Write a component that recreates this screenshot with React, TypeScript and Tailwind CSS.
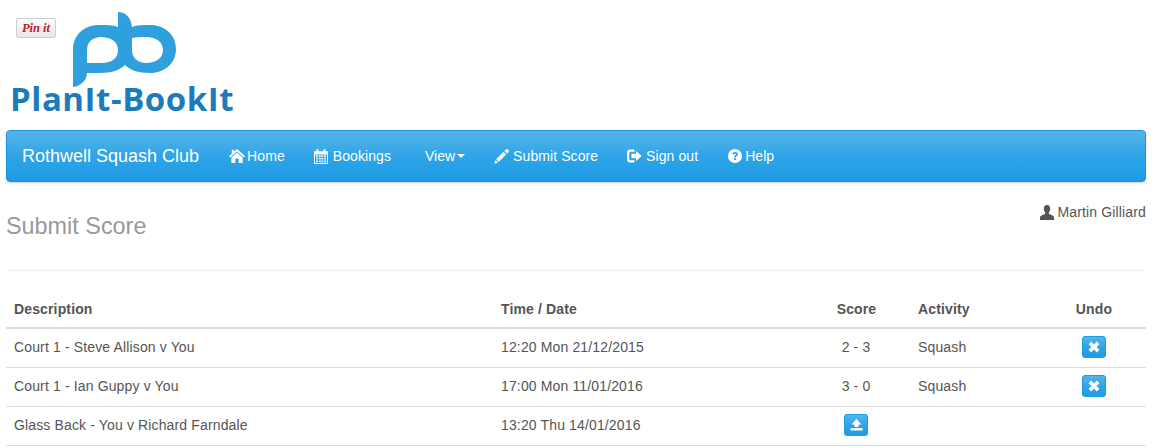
import React from "react";

const font = { fontFamily: '"Liberation Sans", Arial, sans-serif' };

function Home() {
  return (
    <svg width="16" height="14" viewBox="0 0 16 14" fill="currentColor" className="shrink-0">
      <path d="M8 0 L16 7.3 L14.9 8.6 L8 2.4 L1.1 8.6 L0 7.3 L2.8 4.8 V0.8 H5 V2.8 Z" />
      <path d="M8 3.4 L13.6 8.4 V14 H9.6 V9.6 H6.4 V14 H2.4 V8.4 Z" />
    </svg>
  );
}
function Calendar() {
  return (
    <svg width="14" height="15" viewBox="0 0 14 15" className="shrink-0">
      <path fill="currentColor" fillRule="evenodd" d="M0 2.2 H2.5 V0.3 H4.5 V2.2 H9.5 V0.3 H11.5 V2.2 H14 V15 H0 Z M1 5.4 V14 H13 V5.4 Z" />
      <path fill="currentColor" opacity="0.85" d="M2 6.2h2.2v1.8H2zM5 6.2h1.8v1.8H5zM7.4 6.2h1.8v1.8H7.4zM9.9 6.2H12v1.8H9.9zM2 8.8h2.2v1.8H2zM5 8.8h1.8v1.8H5zM7.4 8.8h1.8v1.8H7.4zM9.9 8.8H12v1.8H9.9zM2 11.4h2.2v1.8H2zM5 11.4h1.8v1.8H5zM7.4 11.4h1.8v1.8H7.4zM9.9 11.4H12v1.8H9.9z" />
    </svg>
  );
}
function Pencil() {
  return (
    <svg width="15" height="15" viewBox="0 0 15 15" fill="currentColor" className="shrink-0">
      <path d="M12 0.4 C12.6 0 13.2 0.1 13.6 0.5 L14.6 1.5 C15 1.9 15 2.5 14.6 3 L13 4.6 L10.4 2 Z" />
      <path d="M9.6 2.8 L12.2 5.4 L4.8 12.8 L2.2 10.2 Z" />
      <path d="M1.6 11 L4 13.4 L0.3 14.7 Z" />
    </svg>
  );
}
function SignOut() {
  return (
    <svg width="15" height="14" viewBox="0 0 15 14" fill="currentColor" className="shrink-0">
      <path d="M3 0.5 H7.5 V2.7 H3.6 C2.8 2.7 2.2 3.3 2.2 4.1 V9.9 C2.2 10.7 2.8 11.3 3.6 11.3 H7.5 V13.5 H3 C1.3 13.5 0 12.2 0 10.5 V3.5 C0 1.8 1.3 0.5 3 0.5 Z" />
      <path d="M9 2 L14.8 7 L9 12 V9.2 H4.5 V4.8 H9 Z" />
    </svg>
  );
}
function Help() {
  return (
    <svg width="14" height="14" viewBox="0 0 14 14" className="shrink-0">
      <circle cx="7" cy="7" r="7" fill="currentColor" />
      <path d="M4.4 5.4 C4.5 3.7 5.7 2.9 7.2 2.9 C8.9 2.9 10 3.8 10 5.1 C10 6.8 8.1 6.9 8.1 8.4 H6.2 C6.1 6.3 8 6.2 8 5.3 C8 4.8 7.7 4.6 7.1 4.6 C6.5 4.6 6.2 5 6.1 5.6 Z M6.1 9.2 H8.1 V11.1 H6.1 Z" fill="#2fa2e6" />
    </svg>
  );
}
function User() {
  return (
    <svg width="14" height="15" viewBox="0 0 14 15" fill="currentColor" className="shrink-0">
      <path d="M7 0 C9.2 0 10.2 1.6 10.2 3.8 C10.2 5.5 9.6 6.8 8.9 7.6 V9 C10.6 9.8 14 10.3 14 12.6 V15 H0 V12.6 C0 10.3 3.4 9.8 5.1 9 V7.6 C4.4 6.8 3.8 5.5 3.8 3.8 C3.8 1.6 4.8 0 7 0 Z" />
    </svg>
  );
}
function Remove() {
  return (
    <svg width="12" height="12" viewBox="0 0 12 12" fill="currentColor">
      <path d="M3.2 0.6 L6 3.4 L8.8 0.6 L11.4 3.2 L8.6 6 L11.4 8.8 L8.8 11.4 L6 8.6 L3.2 11.4 L0.6 8.8 L3.4 6 L0.6 3.2 Z" />
    </svg>
  );
}
function Upload() {
  return (
    <svg width="13" height="13" viewBox="0 0 13 13" fill="currentColor">
      <path d="M6.5 1 L11.5 6.5 H8.5 V9 H4.5 V6.5 H1.5 Z" />
      <path d="M0.5 10 H12.5 V12.5 H0.5 Z" />
    </svg>
  );
}

function Btn({ children }: { children: React.ReactNode }) {
  return (
    <span className="inline-flex items-center justify-center w-6 h-[22px] rounded-[3px] border border-[#1f9ce3] text-white bg-gradient-to-b from-[#54b4eb] via-[#2fa4e7] to-[#1d9ce5] align-middle">
      {children}
    </span>
  );
}

function NavItem({ icon, label, cls = "gap-[4px] px-[15px]" }: { icon?: React.ReactNode; label: React.ReactNode; cls?: string }) {
  return (
    <a className={"flex items-center h-full text-white text-sm tracking-[0.08px] whitespace-nowrap " + cls}>
      {icon}
      <span>{label}</span>
    </a>
  );
}

const rows = [
  { d: "Court 1 - Steve Allison v You", t: "12:20 Mon 21/12/2015", s: "2 - 3", a: "Squash", u: true },
  { d: "Court 1 - Ian Guppy v You", t: "17:00 Mon 11/01/2016", s: "3 - 0", a: "Squash", u: true },
  { d: "Glass Back - You v Richard Farndale", t: "13:20 Thu 14/01/2016", s: null, a: "", u: false },
];

export default function App() {
  return (
    <div className="bg-white text-[#555555] text-sm pl-[6px] pr-[8px] h-[448px] overflow-hidden" style={font}>
      <div className="relative h-[130px]">
        <a className="absolute left-[10px] top-[18px] w-10 h-5 border border-[#cfcfcf] rounded-[2px] bg-gradient-to-b from-[#fdfdfd] to-[#e6e6e6] flex items-center justify-center text-[#bd2126] text-[12.5px] font-bold italic leading-none whitespace-nowrap" style={{ fontFamily: '"Liberation Serif", serif' }}>
          Pin it
        </a>
        <svg width="110" height="80" viewBox="70 10 110 80" className="absolute left-[64px] top-[10px]" fill="#2f9fdd">
          <path
            fillRule="evenodd"
            d="M73 87 V50 C73 35 84 25 99 25 C107 25 113 25 118 27 V12 C125 12 131 17 132 27 C137 25 143 25 150 25 C165 25 176 35 176 49 C176 63 165 73 150 73 C138 73 130 70 125 65 C120 70 112 73 100 73 H87 C87 80 81 86 73 87 Z M87 63 V50 C87 42 93 37 101 37 C111 37 118 42 118 50 C118 58 112 63 102 63 Z M132 38 C136 37 141 37 146 37 C156 37 163 42 163 50 C163 58 156 63 146 63 C138 63 132 58 132 50 Z"
          />
        </svg>
        <div className="absolute left-[4px] top-[77px] text-[#1c7cbb] text-[33px] tracking-[0.55px] font-bold leading-[44px] whitespace-nowrap" style={{ fontFamily: '"Open Sans", sans-serif' }}>
          PlanIt-BookIt
        </div>
      </div>

      <nav className="flex items-center h-[52px] rounded-[4px] border border-[#1995dc] bg-gradient-to-b from-[#54b4eb] via-[#2fa4e7] to-[#1d9ce5] shadow-[0_1px_2px_rgba(0,0,0,0.2)]">
        <a className="px-[15px] text-white text-lg whitespace-nowrap">Rothwell Squash Club</a>
        <NavItem icon={<Home />} label="Home" cls="gap-[2px] pl-[15px] pr-[14px]" />
        <NavItem icon={<Calendar />} label="Bookings" cls="gap-[5px] px-[15px]" />
        <a className="flex items-center ml-[4px] pl-[15px] pr-[14px] h-full text-white text-sm">
          View
          <span className="ml-0.5 w-0 h-0 border-x-4 border-x-transparent border-t-4 border-t-white" />
        </a>
        <NavItem icon={<Pencil />} label="Submit Score" cls="gap-[4px] pl-[15px] pr-[14px]" />
        <NavItem icon={<SignOut />} label="Sign out" />
        <NavItem icon={<Help />} label="Help" cls="gap-[3px] px-[15px]" />
      </nav>

      <div className="flex justify-between items-start h-[89px] border-b border-[#eeeeee]">
        <h1 className="mt-[29px] text-[23.4px] leading-[30px] font-normal text-[#999999]">Submit Score</h1>
        <div className="mt-[20px] flex items-center gap-1 leading-5 tracking-[0.14px]">
          <User />
          <span>Martin Gilliard</span>
        </div>
      </div>

      <table className="mt-[19px] w-[1140px] table-fixed border-collapse tracking-[0.14px]">
        <colgroup>
          <col className="w-[487px]" />
          <col className="w-[310px]" />
          <col className="w-[107px]" />
          <col className="w-[132px]" />
          <col className="w-[104px]" />
        </colgroup>
        <thead>
          <tr className="h-[38px] border-b-2 border-[#dddddd] font-bold">
            <th className="px-2 text-left">Description</th>
            <th className="px-2 text-left">Time / Date</th>
            <th className="px-2 text-center">Score</th>
            <th className="px-2 text-left">Activity</th>
            <th className="px-2 text-center">Undo</th>
          </tr>
        </thead>
        <tbody>
          {rows.map((r) => (
            <tr key={r.d} className="h-[39px] border-b border-[#dddddd]">
              <td className="px-2 pb-[2px]">{r.d}</td>
              <td className="px-2 pb-[2px]">{r.t}</td>
              <td className="pl-2 pr-[9px] pb-[2px] text-center">
                {r.s ?? (
                  <Btn>
                    <Upload />
                  </Btn>
                )}
              </td>
              <td className="px-2 pb-[2px]">{r.a}</td>
              <td className="px-2 pb-[2px] text-center">
                {r.u && (
                  <Btn>
                    <Remove />
                  </Btn>
                )}
              </td>
            </tr>
          ))}
        </tbody>
      </table>
    </div>
  );
}
